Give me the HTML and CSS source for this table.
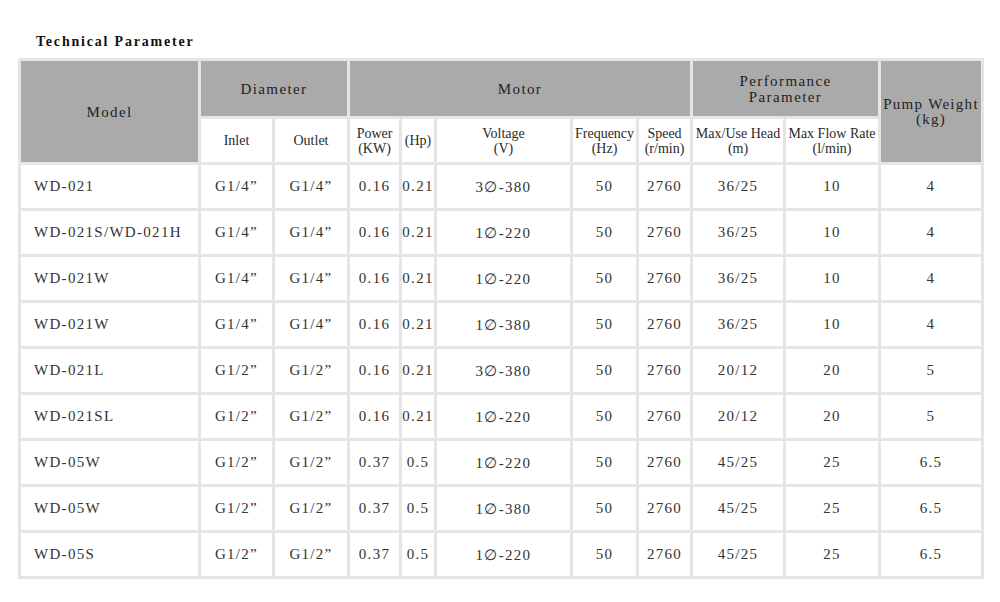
FILE: index.html
```html
<!DOCTYPE html>
<html>
<head>
<meta charset="utf-8">
<link rel="stylesheet" href="styles.css">
</head>
<body>
<div class="page">
  <h2 class="title">Technical Parameter</h2>
  <table class="spec">
    <colgroup>
      <col class="c-model"><col class="c-inlet"><col class="c-outlet"><col class="c-power"><col class="c-hp"><col class="c-volt"><col class="c-freq"><col class="c-speed"><col class="c-head"><col class="c-flow"><col class="c-weight">
    </colgroup>
    <thead>
      <tr class="h1">
        <th rowspan="2" class="grey">Model</th>
        <th colspan="2" class="grey">Diameter</th>
        <th colspan="5" class="grey">Motor</th>
        <th colspan="2" class="grey">Performance<br>Parameter</th>
        <th rowspan="2" class="grey weight">Pump Weight<br>(kg)</th>
      </tr>
      <tr class="h2">
        <th class="sub">Inlet</th>
        <th class="sub">Outlet</th>
        <th class="sub">Power<br>(KW)</th>
        <th class="sub">(Hp)</th>
        <th class="sub">Voltage<br>(V)</th>
        <th class="sub">Frequency<br>(Hz)</th>
        <th class="sub">Speed<br>(r/min)</th>
        <th class="sub">Max/Use Head<br>(m)</th>
        <th class="sub">Max Flow Rate<br>(l/min)</th>
      </tr>
    </thead>
    <tbody>
      <tr><td class="model">WD-021</td><td>G1/4”</td><td>G1/4”</td><td>0.16</td><td>0.21</td><td>3∅-380</td><td>50</td><td>2760</td><td>36/25</td><td>10</td><td>4</td></tr>
      <tr><td class="model">WD-021S/WD-021H</td><td>G1/4”</td><td>G1/4”</td><td>0.16</td><td>0.21</td><td>1∅-220</td><td>50</td><td>2760</td><td>36/25</td><td>10</td><td>4</td></tr>
      <tr><td class="model">WD-021W</td><td>G1/4”</td><td>G1/4”</td><td>0.16</td><td>0.21</td><td>1∅-220</td><td>50</td><td>2760</td><td>36/25</td><td>10</td><td>4</td></tr>
      <tr><td class="model">WD-021W</td><td>G1/4”</td><td>G1/4”</td><td>0.16</td><td>0.21</td><td>1∅-380</td><td>50</td><td>2760</td><td>36/25</td><td>10</td><td>4</td></tr>
      <tr><td class="model">WD-021L</td><td>G1/2”</td><td>G1/2”</td><td>0.16</td><td>0.21</td><td>3∅-380</td><td>50</td><td>2760</td><td>20/12</td><td>20</td><td>5</td></tr>
      <tr><td class="model">WD-021SL</td><td>G1/2”</td><td>G1/2”</td><td>0.16</td><td>0.21</td><td>1∅-220</td><td>50</td><td>2760</td><td>20/12</td><td>20</td><td>5</td></tr>
      <tr><td class="model">WD-05W</td><td>G1/2”</td><td>G1/2”</td><td>0.37</td><td>0.5</td><td>1∅-220</td><td>50</td><td>2760</td><td>45/25</td><td>25</td><td>6.5</td></tr>
      <tr><td class="model">WD-05W</td><td>G1/2”</td><td>G1/2”</td><td>0.37</td><td>0.5</td><td>1∅-380</td><td>50</td><td>2760</td><td>45/25</td><td>25</td><td>6.5</td></tr>
      <tr><td class="model">WD-05S</td><td>G1/2”</td><td>G1/2”</td><td>0.37</td><td>0.5</td><td>1∅-220</td><td>50</td><td>2760</td><td>45/25</td><td>25</td><td>6.5</td></tr>
    </tbody>
  </table>
</div>
</body>
</html>
```

FILE: styles.css
```css
html, body {
  margin: 0;
  padding: 0;
  background: #ffffff;
}

.page {
  padding: 34px 18px 0 18px;
  font-family: "Liberation Serif", "Times New Roman", serif;
  color: #333333;
}

.title {
  margin: 0 0 8px 18px;
  font-size: 14px;
  line-height: 16px;
  font-weight: bold;
  letter-spacing: 1.8px;
  color: #111111;
}

.spec {
  table-layout: fixed;
  width: 964px;
  border-collapse: separate;
  border-spacing: 3px;
  background: #e5e5e5;
}

.c-model { width: 177px; }
.c-inlet { width: 71px; }
.c-outlet { width: 72px; }
.c-power { width: 49px; }
.c-hp { width: 32px; }
.c-volt { width: 133px; }
.c-freq { width: 63px; }
.c-speed { width: 51px; }
.c-head { width: 90px; }
.c-flow { width: 92px; }
.c-weight { width: 100px; }

.spec th, .spec td {
  padding: 0;
  text-align: center;
  vertical-align: middle;
  font-weight: normal;
  background: #ffffff;
  white-space: nowrap;
  overflow: hidden;
}

.spec th.grey {
  background: #aaaaaa;
  color: #222222;
  font-size: 15px;
  line-height: 16px;
  letter-spacing: 1.4px;
}

.spec th.weight {
  line-height: 15px;
  letter-spacing: 1.3px;
}

.h1 th { height: 55px; }
.h2 th { height: 43px; }

.spec th.sub {
  font-size: 14px;
  line-height: 15px;
  color: #2a2a2a;
}

.spec td {
  height: 43px;
  font-size: 15px;
  letter-spacing: 1.3px;
  color: #333333;
}

.spec td.model {
  text-align: left;
  padding-left: 13px;
}
```
